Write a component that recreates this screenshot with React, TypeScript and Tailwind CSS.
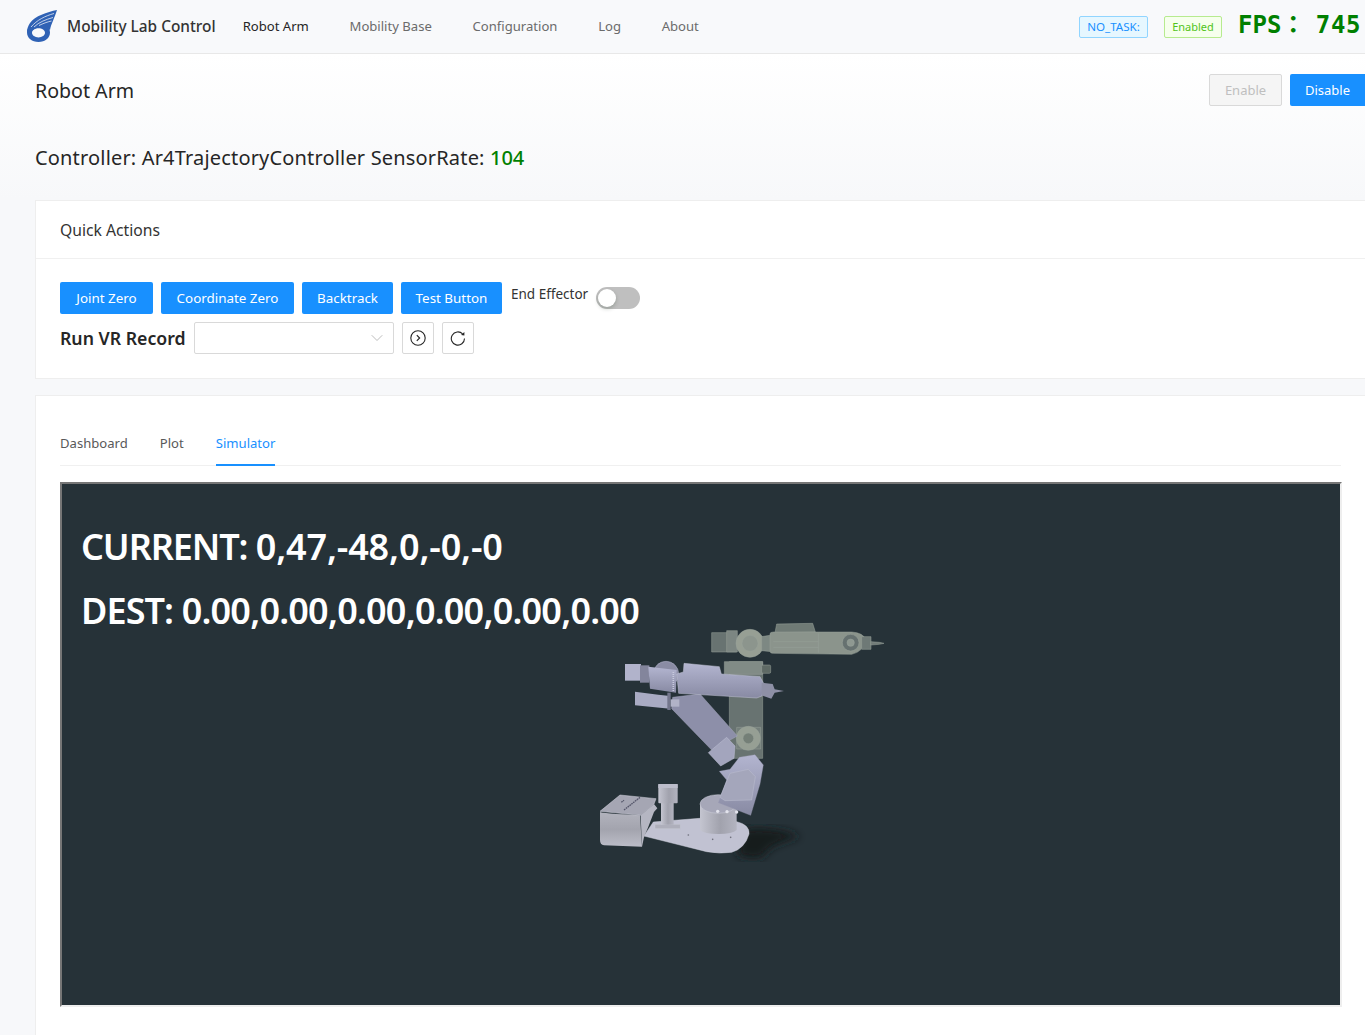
import { ChevronDown } from "lucide-react";

const navItems = ["Mobility Base", "Configuration", "Log", "About"];
const actions = [
  { label: "Joint Zero", width: "w-[93px]" },
  { label: "Coordinate Zero", width: "w-[133px]" },
  { label: "Backtrack", width: "w-[91px]" },
  { label: "Test Button", width: "w-[101px]" },
];

const Logo = () => (
  <svg width="34" height="34" viewBox="0 0 34 34" className="shrink-0">
    <path d="M32 0 C22 2 10 6 5 13 C3 16 2 19 2 22 L8 20 C12 17 20 16 25 20 C26 14 30 7 32 0 Z" fill="#2f62b5" />
    <path d="M2 22.5 C2 17 7 13 13.5 13 C20 13 25 17 25 22.5 C25 28 20 32 13.5 32 C7 32 2 28 2 22.5 Z M7 22.8 C7 25.5 10 27.4 13.5 27.4 C17 27.4 20 25.5 20 22.8 C20 20 17 18.2 13.5 18.2 C10 18.2 7 20 7 22.8 Z" fill="#2f62b5" fillRule="evenodd" />
    <path d="M6 17 C12 10 20 6 29 3.5 M9 17 C14 12 21 9.5 28 7.5 M14 15.5 C18 13.5 22 12 26.5 11" fill="none" stroke="#e4ebf6" strokeWidth="0.8" />
  </svg>
);

const RobotArm = () => (
  <svg width="320" height="260" viewBox="0 0 960 780" strokeLinejoin="round">
    <defs>
      <linearGradient id="body" x1="0" y1="0" x2="0" y2="1">
        <stop offset="0" stopColor="#b3b5d0" />
        <stop offset="1" stopColor="#888aa3" />
      </linearGradient>
      <linearGradient id="cyl" x1="0" y1="0" x2="1" y2="0">
        <stop offset="0" stopColor="#c4c5d0" />
        <stop offset="0.55" stopColor="#a1a2ad" />
        <stop offset="1" stopColor="#b3b4c0" />
      </linearGradient>
      <linearGradient id="box" x1="0" y1="0" x2="0" y2="1">
        <stop offset="0" stopColor="#b2b3bd" />
        <stop offset="0.5" stopColor="#a3a4ae" />
        <stop offset="1" stopColor="#bcbdc8" />
      </linearGradient>
      <filter id="soft">
        <feGaussianBlur stdDeviation="12" />
      </filter>
    </defs>

    {/* floor shadow */}
    <path d="M490 660 C540 645 620 660 660 680 C620 695 570 700 550 740 C520 750 480 745 470 730 Z" fill="#161b1f" filter="url(#soft)" />

    {/* ghost arm (destination pose) */}
    <g stroke="#98a39a" strokeWidth="1.5">
      <rect x="448" y="155" width="100" height="290" fill="#687371" />
      <rect x="433" y="155" width="115" height="38" fill="#818b86" />
      <rect x="545" y="165" width="27" height="25" rx="4" fill="#5f6a65" />
      <rect x="395" y="68" width="75" height="58" fill="#687371" />
      <rect x="440" y="62" width="32" height="64" fill="#7c8682" />
      <circle cx="510" cy="100" r="42" fill="#979f94" />
      <circle cx="510" cy="100" r="24" fill="#8c958d" />
      <path d="M545 80 L575 75 L575 125 L545 122 Z" fill="#7d8883" />
      <path d="M585 68 L590 42 L698 40 L706 66 Z" fill="#6f7a75" />
      <path d="M570 72 Q570 66 580 66 L815 66 Q850 68 858 90 Q850 125 815 133 L580 130 Q570 130 570 124 Z" fill="#8b948c" />
      <path d="M580 95 L715 95 M580 112 L715 112 M715 70 L715 128" fill="none" />
      <circle cx="812" cy="98" r="25" fill="#667170" />
      <circle cx="812" cy="98" r="11" fill="#8e9891" />
      <rect x="845" y="80" width="28" height="38" fill="#6e7976" />
      <path d="M872 95 L898 97 L912 100 L898 103 L872 105 Z" fill="#727c79" />
      <rect x="470" y="352" width="72" height="65" fill="#747f7b" />
      <circle cx="505" cy="385" r="36" fill="#969f94" />
      <circle cx="505" cy="385" r="16" fill="#747f77" />
    </g>

    {/* base */}
    <path d="M192 678 L220 636 L360 625 L470 635 Q510 645 507 672 Q495 715 455 727 Q420 732 380 725 L300 705 Z" fill="#c1c2d2" stroke="#d3d4e0" strokeWidth="1.5" />
    <path d="M60 606 Q62 610 180 616 L186 710 L72 706 Q60 704 60 690 Z" fill="url(#box)" />
    <path d="M60 604 L120 555 L228 566 L222 582 L182 616 Z" fill="#a5a6b3" stroke="#d6d7e2" strokeWidth="1.5" />
    <path d="M182 616 L222 582 L232 595 L222 606 L205 650 L192 682 L186 710 Z" fill="#b5b6c2" />
    <rect x="225" y="643" width="76" height="13" fill="#aeafbb" stroke="#cfd0da" strokeWidth="1" />
    <rect x="243" y="578" width="38" height="66" fill="url(#cyl)" />
    <rect x="235" y="522" width="58" height="58" rx="3" fill="url(#cyl)" />
    <rect x="235" y="522" width="58" height="12" fill="#bcbdcb" />
    <path d="M360 582 L360 660 Q372 672 415 672 Q458 672 470 660 L470 590 Z" fill="url(#cyl)" />
    <ellipse cx="415" cy="582" rx="55" ry="28" fill="#a6a7b8" stroke="#cfd0dc" strokeWidth="1.5" />

    {/* shoulder */}
    <path d="M418 484 L450 478 L478 442 L525 434 L550 465 L540 522 L512 616 L415 578 L440 510 Z" fill="url(#body)" stroke="#9a9cb4" strokeWidth="1" />
    <path d="M450 490 L505 478 L526 500 L515 570 L435 572 L420 562 Z" fill="#a4a6bb" stroke="#bcbed0" strokeWidth="1.5" />
    <circle cx="413" cy="604" r="5" fill="#e2e3ec" />
    <circle cx="441" cy="605" r="5" fill="#e2e3ec" />
    <circle cx="470" cy="606" r="5" fill="#e2e3ec" />

    {/* upper arm */}
    <path d="M278 262 L360 252 L472 378 L395 420 L275 296 Z" fill="#8d8fa9" stroke="#a5a7bd" strokeWidth="1.5" />
    <path d="M385 428 L440 382 L465 408 L462 445 L422 468 Z" fill="#a3a5bd" stroke="#bfc1d4" strokeWidth="1.5" />

    {/* motors and forearm */}
    <path d="M165 245 L235 254 L270 258 L270 296 L165 286 Z" fill="#a9abc3" />
    <rect x="262" y="248" width="10" height="52" fill="#74768c" />
    <rect x="272" y="268" width="26" height="22" fill="#b1b3c7" />
    <rect x="135" y="162" width="48" height="50" fill="#b1b3cb" />
    <rect x="180" y="166" width="28" height="52" fill="#83859c" />
    <circle cx="258" cy="192" r="38" fill="#8a8ca4" stroke="#b5b7cc" strokeWidth="1.5" />
    <path d="M205 170 L290 180 L288 248 L210 236 Z" fill="url(#body)" />
    <path d="M290 192 L310 186 L312 160 L418 170 L424 192 L540 200 L552 222 L546 258 L530 264 L296 250 Z" fill="url(#body)" stroke="#c0c2d5" strokeWidth="1.5" />
    <path d="M280 186 L280 245" fill="none" stroke="#c8cade" strokeWidth="5" strokeDasharray="3 3" />
    <path d="M545 218 L578 222 L584 238 L612 243 L584 248 L574 266 L545 256 Z" fill="#8e90a6" />

    {/* plate holes and label */}
    <circle cx="325" cy="675" r="2.5" fill="#6d6e7a" />
    <circle cx="452" cy="682" r="2.5" fill="#6d6e7a" />
    <circle cx="398" cy="688" r="2.5" fill="#6d6e7a" />
    <path d="M132 600 L180 562 M124 577 L132 571" stroke="#55566a" strokeWidth="4" strokeDasharray="5 2" />
  </svg>
);

export default function App() {
  return (
    <div className="min-h-[1035px] w-[1365px] overflow-hidden bg-[#f7f8fa] font-['Noto_Sans',sans-serif] text-[14px] text-[#262626]">
      <header className="flex h-[54px] items-center border-b border-[#e8e8e8] bg-[#f8f9fb] pl-[25px]">
        <Logo />
        <span className="ml-[8px] text-[15.4px] font-medium text-[#333]">Mobility Lab Control</span>
        <nav className="ml-[27px] flex items-center gap-[40.7px] text-[13.1px]">
          <span className="text-[#262626]">Robot Arm</span>
          {navItems.map((item) => (
            <span key={item} className="text-[#6b6b6b]">
              {item}
            </span>
          ))}
        </nav>
        <div className="ml-auto flex items-center">
          <span className="flex h-[22px] w-[69px] items-center justify-center rounded-[2px] border border-[#91d5ff] bg-[#e6f7ff] text-[11.6px] text-[#1890ff]">
            NO_TASK:
          </span>
          <span className="ml-[16px] flex h-[22px] w-[58px] items-center justify-center rounded-[2px] border border-[#b7eb8f] bg-[#f6ffed] pt-[1px] text-[11px] text-[#52c41a]">
            Enabled
          </span>
          <span className="mb-[4px] ml-[16px] mr-[4px] flex w-[123px] justify-between whitespace-nowrap font-['DejaVu_Sans_Mono','Noto_Sans_CJK_TC',monospace] text-[24px] leading-none font-bold text-[#008000]">
            <span>FPS：</span>
            <span className="tracking-[0.6px]">745</span>
          </span>
        </div>
      </header>

      <div className="flex h-[146px] flex-col bg-gradient-to-b from-white to-[#f7f8fa] pl-[35px]">
        <div className="flex h-[72px] items-center justify-between">
          <h1 className="pt-[2px] text-[19.6px] text-[#262626]">Robot Arm</h1>
          <div className="flex gap-[8px] text-[13px]">
            <button className="h-[32px] w-[73px] rounded-[2px] border border-[#d9d9d9] bg-[#f5f5f5] pt-[1px] text-[#bfbfbf]">Enable</button>
            <button className="h-[32px] w-[75px] rounded-l-[2px] bg-[#1890ff] pt-[1px] text-white">Disable</button>
          </div>
        </div>
        <div className="mt-[18px] text-[20px] leading-[28px] tracking-[0.17px] text-[#262626]">
          Controller: Ar4TrajectoryController SensorRate: <span className="font-medium tracking-normal text-[#008000]">104</span>
        </div>
      </div>

      <section className="ml-[35px] h-[179px] border border-r-0 border-[#eeeeee] bg-white">
        <div className="flex h-[58px] items-center border-b border-[#f0f0f0] pl-[24px] pt-[2px] text-[15.7px] text-[#333]">
          Quick Actions
        </div>
        <div className="pl-[24px] pt-[23px]">
          <div className="flex items-start">
            {actions.map((action) => (
              <button key={action.label} className={`mr-[8px] h-[32px] rounded-[2px] bg-[#1890ff] text-[13.4px] text-white ${action.width}`}>
                {action.label}
              </button>
            ))}
            <span className="ml-[1px] mt-[3px] text-[13.5px] leading-[18px] text-[#333]">End Effector</span>
            <span className="ml-[8px] mt-[5px] flex h-[22px] w-[44px] items-center rounded-full bg-[#bfbfbf] pl-[2px]">
              <span className="h-[18px] w-[18px] rounded-full bg-white shadow-[0_2px_4px_rgba(0,35,11,0.2)]" />
            </span>
          </div>
          <div className="mt-[8px] flex items-center">
            <span className="text-[17.7px] font-semibold text-[#262626]">Run VR Record</span>
            <div className="ml-[8px] flex h-[32px] w-[200px] items-center justify-end rounded-[2px] border border-[#d9d9d9] bg-white pr-[6px]">
              <ChevronDown size={20} strokeWidth={0.9} className="text-[#a6a6a6]" />
            </div>
            <button className="ml-[8px] flex h-[32px] w-[32px] items-center justify-center rounded-[2px] border border-[#d9d9d9] bg-white">
              <svg width="16" height="16" viewBox="0 0 16 16" fill="none" stroke="#262626" strokeWidth="1.1">
                <circle cx="8" cy="8" r="7.2" />
                <path d="M6.8 5.2 L9.6 8 L6.8 10.8" strokeWidth="1.2" />
              </svg>
            </button>
            <button className="ml-[8px] flex h-[32px] w-[32px] items-center justify-center rounded-[2px] border border-[#d9d9d9] bg-white">
              <svg width="16" height="16" viewBox="0 0 16 16" fill="none" stroke="#262626" strokeWidth="1.1">
                <path d="M12.6 3.9 A6.6 6.6 0 1 0 14.5 8.6" />
                <path d="M14.4 1.9 L14.4 5.4 L11 5 Z" fill="#262626" stroke="none" />
              </svg>
            </button>
          </div>
        </div>
      </section>

      <section className="ml-[35px] mt-[16px] h-[640px] border-t border-l border-[#eeeeee] bg-white pl-[24px] pr-[24px] pt-[24px]">
        <div className="flex h-[46px] gap-[32px] border-b border-[#f0f0f0] text-[13.1px] text-[#595959]">
          <span className="pt-[14px]">Dashboard</span>
          <span className="pt-[14px]">Plot</span>
          <span className="h-[46px] border-b-2 border-[#1890ff] pt-[14px] text-[#1890ff]">Simulator</span>
        </div>
        <div className="relative mr-[-1px] mt-[16px] h-[525px] border-2 border-t-[#767676] border-r-[#eeeeee] border-b-[#eeeeee] border-l-[#767676] bg-[#263238] pl-[19px] pt-[39px] text-white">
          <p className="text-[36px] leading-[48px] font-semibold">
            <span className="tracking-[-1.1px]">CURRENT: </span>
            <span className="tracking-[-0.15px]">0,47,-48,0,-0,-0</span>
          </p>
          <p className="mt-[16px] text-[36px] leading-[48px] font-semibold">
            <span className="tracking-[-0.9px]">DEST: </span>
            <span className="tracking-[-0.8px]">0.00,0.00,0.00,0.00,0.00,0.00</span>
          </p>
          <div className="absolute left-[518px] top-[126px]">
            <RobotArm />
          </div>
        </div>
      </section>
    </div>
  );
}
